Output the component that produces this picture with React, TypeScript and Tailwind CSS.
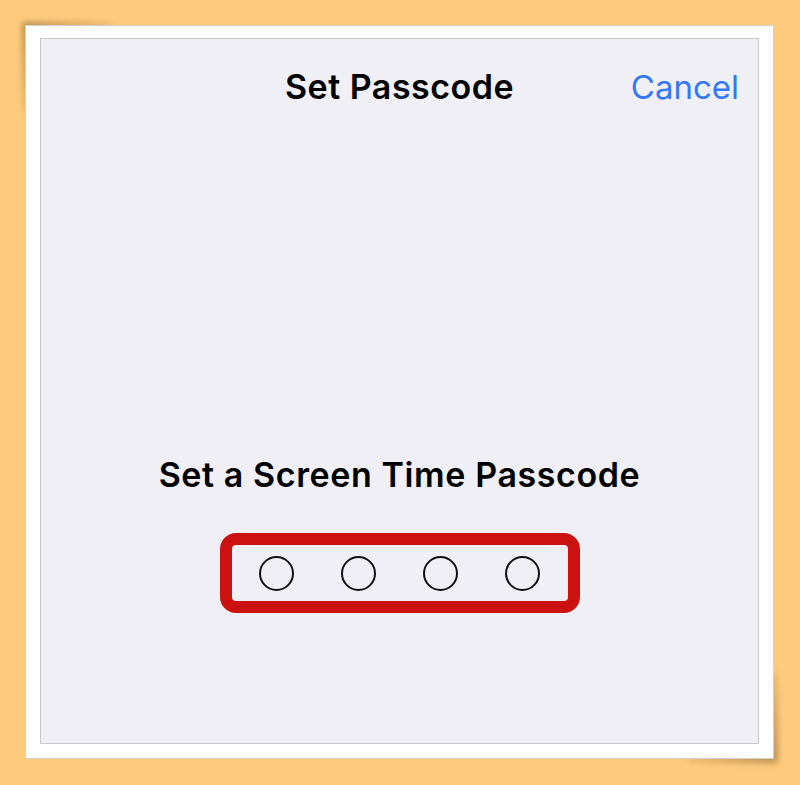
import React from "react";

function Dot() {
  return <div className="h-[35px] w-[35px] rounded-full border-2 border-[#111]" />;
}

export default function App() {
  return (
    <div
      className="w-[800px] h-[785px] bg-[#FECB7E] pt-[25px] pl-[25px] pr-[26px] pb-[26px]"
      style={{ fontFamily: "Inter, 'Noto Sans', sans-serif" }}
    >
      <div className="relative h-full w-full">
        {/* corner shadows (page curl look) */}
        <div className="absolute -left-[3px] -top-[3px] h-[90px] w-[90px] bg-gradient-to-br from-[#7a5a25]/55 via-[#7a5a25]/15 to-transparent blur-[3px]" />
        <div className="absolute -right-[4px] -bottom-[4px] h-[90px] w-[90px] bg-gradient-to-tl from-[#7a5a25]/55 via-[#7a5a25]/15 to-transparent blur-[3px]" />
        <div className="relative h-full w-full border border-[#cfcfcf] bg-white pt-[12px] px-[14px] pb-[14px]">
          <div className="flex h-full flex-col items-center border border-[#c9c9cc] bg-[#F0EFF5]">
            <div className="grid w-full grid-cols-[1fr_auto_1fr] items-baseline pt-[28px]">
              <div />
              <div className="text-[34px] leading-[40px] font-semibold text-black tracking-[0.5px]">
                Set Passcode
              </div>
              <div className="text-right pr-[19px] text-[33px] leading-[40px] text-[#3478F6]">
                Cancel
              </div>
            </div>
            <div className="mt-[348px] text-[34px] leading-[40px] font-semibold text-black tracking-[0.6px]">
              Set a Screen Time Passcode
            </div>
            <div className="mt-[38px] flex h-[80px] w-[360px] items-center justify-center gap-[47px] rounded-[16px] border-[12px] border-[#CC1111]">
              <Dot />
              <Dot />
              <Dot />
              <Dot />
            </div>
          </div>
        </div>
      </div>
    </div>
  );
}
